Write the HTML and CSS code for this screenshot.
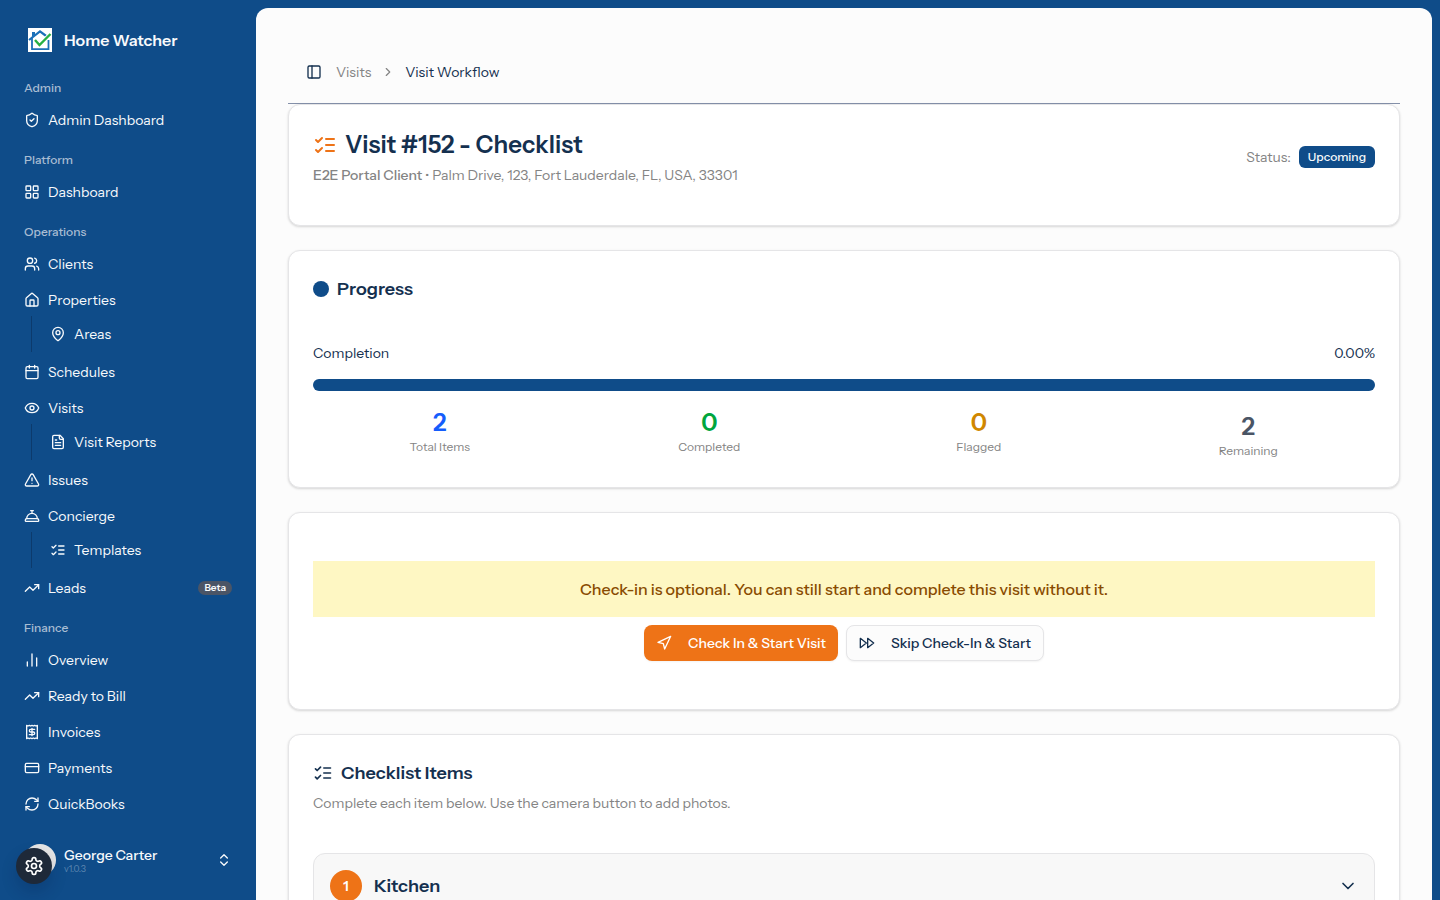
FILE: index.html
```html
<!DOCTYPE html>
<html lang="en">
<head>
<meta charset="utf-8">
<meta name="viewport" content="width=device-width, initial-scale=1">
<title>Visit Workflow - Home Watcher</title>
<link rel="stylesheet" href="styles.css">
</head>
<body>
<svg class="sprite" aria-hidden="true">
  <symbol id="shield" viewBox="0 0 24 24"><path d="M20 13c0 5-3.500 7.500-7.660 8.950a1 1 0 0 1-.67-.01C7.500 20.500 4 18 4 13V6a1 1 0 0 1 1-1c2 0 4.500-1.200 6.240-2.720a1.170 1.170 0 0 1 1.520 0C14.510 3.810 17 5 19 5a1 1 0 0 1 1 1z"/><path d="m9 12 2 2 4-4"/></symbol>
  <symbol id="grid" viewBox="0 0 24 24"><rect x="3" y="3" width="7" height="7" rx="1"/><rect x="14" y="3" width="7" height="7" rx="1"/><rect x="14" y="14" width="7" height="7" rx="1"/><rect x="3" y="14" width="7" height="7" rx="1"/></symbol>
  <symbol id="users" viewBox="0 0 24 24"><path d="M16 21v-2a4 4 0 0 0-4-4H6a4 4 0 0 0-4 4v2"/><circle cx="9" cy="7" r="4"/><path d="M22 21v-2a4 4 0 0 0-3-3.870M16 3.130a4 4 0 0 1 0 7.750"/></symbol>
  <symbol id="house" viewBox="0 0 24 24"><path d="M15 21v-8a1 1 0 0 0-1-1h-4a1 1 0 0 0-1 1v8"/><path d="M3 10a2 2 0 0 1 .709-1.528l7-5.999a2 2 0 0 1 2.582 0l7 5.999A2 2 0 0 1 21 10v9a2 2 0 0 1-2 2H5a2 2 0 0 1-2-2z"/></symbol>
  <symbol id="pin" viewBox="0 0 24 24"><path d="M20 10c0 4.993-5.539 10.193-7.399 11.799a1 1 0 0 1-1.202 0C9.539 20.193 4 14.993 4 10a8 8 0 0 1 16 0"/><circle cx="12" cy="10" r="3"/></symbol>
  <symbol id="calendar" viewBox="0 0 24 24"><path d="M8 2v4M16 2v4"/><rect x="3" y="4" width="18" height="18" rx="2"/><path d="M3 10h18"/></symbol>
  <symbol id="eye" viewBox="0 0 24 24"><path d="M2.062 12.348a1 1 0 0 1 0-.696 10.750 10.750 0 0 1 19.876 0 1 1 0 0 1 0 .696 10.750 10.750 0 0 1-19.876 0"/><circle cx="12" cy="12" r="3"/></symbol>
  <symbol id="file" viewBox="0 0 24 24"><path d="M15 2H6a2 2 0 0 0-2 2v16a2 2 0 0 0 2 2h12a2 2 0 0 0 2-2V7Z"/><path d="M14 2v4a2 2 0 0 0 2 2h4M10 9H8M16 13H8M16 17H8"/></symbol>
  <symbol id="alert" viewBox="0 0 24 24"><path d="m21.730 18-8-14a2 2 0 0 0-3.480 0l-8 14A2 2 0 0 0 4 21h16a2 2 0 0 0 1.730-3M12 9v4M12 17h.01"/></symbol>
  <symbol id="bell" viewBox="0 0 24 24"><path d="M3 20a1 1 0 0 1-1-1v-1a2 2 0 0 1 2-2h16a2 2 0 0 1 2 2v1a1 1 0 0 1-1 1Z"/><path d="M20 16a8 8 0 1 0-16 0M12 4v4M10 4h4"/></symbol>
  <symbol id="checks" viewBox="0 0 24 24"><path d="m3 17 2 2 4-4M3 7l2 2 4-4M13 6h8M13 12h8M13 18h8"/></symbol>
  <symbol id="trend" viewBox="0 0 24 24"><path d="M22 7 13.500 15.500 8.500 10.500 2 17"/><path d="M16 7h6v6"/></symbol>
  <symbol id="chart" viewBox="0 0 24 24"><path d="M5 21v-6M12 21V3M19 21V9"/></symbol>
  <symbol id="receipt" viewBox="0 0 24 24"><path d="M4 2v20l2-1 2 1 2-1 2 1 2-1 2 1 2-1 2 1V2l-2 1-2-1-2 1-2-1-2 1-2-1-2 1Z"/><path d="M16 8h-6a2 2 0 1 0 0 4h4a2 2 0 1 1 0 4H8M12 17.500v-11"/></symbol>
  <symbol id="card" viewBox="0 0 24 24"><rect x="2" y="5" width="20" height="14" rx="2"/><path d="M2 10h20"/></symbol>
  <symbol id="refresh" viewBox="0 0 24 24"><path d="M3 12a9 9 0 0 1 9-9 9.750 9.750 0 0 1 6.740 2.740L21 8"/><path d="M21 3v5h-5M21 12a9 9 0 0 1-9 9 9.750 9.750 0 0 1-6.740-2.740L3 16"/><path d="M8 16H3v5"/></symbol>
  <symbol id="updown" viewBox="0 0 24 24"><path d="m7 15 5 5 5-5M7 9l5-5 5 5"/></symbol>
  <symbol id="gear" viewBox="0 0 24 24"><path d="M12.220 2h-.44a2 2 0 0 0-2 2v.18a2 2 0 0 1-1 1.730l-.43.25a2 2 0 0 1-2 0l-.15-.08a2 2 0 0 0-2.730.73l-.22.38a2 2 0 0 0 .73 2.730l.15.1a2 2 0 0 1 1 1.720v.51a2 2 0 0 1-1 1.740l-.15.09a2 2 0 0 0-.73 2.730l.22.38a2 2 0 0 0 2.730.73l.15-.08a2 2 0 0 1 2 0l.43.25a2 2 0 0 1 1 1.730V20a2 2 0 0 0 2 2h.44a2 2 0 0 0 2-2v-.18a2 2 0 0 1 1-1.730l.43-.25a2 2 0 0 1 2 0l.15.08a2 2 0 0 0 2.730-.73l.22-.39a2 2 0 0 0-.73-2.730l-.15-.08a2 2 0 0 1-1-1.740v-.5a2 2 0 0 1 1-1.740l.15-.09a2 2 0 0 0 .73-2.730l-.22-.38a2 2 0 0 0-2.730-.73l-.15.08a2 2 0 0 1-2 0l-.43-.25a2 2 0 0 1-1-1.730V4a2 2 0 0 0-2-2z"/><circle cx="12" cy="12" r="3"/></symbol>
  <symbol id="panel" viewBox="0 0 24 24"><rect x="3" y="3" width="18" height="18" rx="2"/><path d="M9 3v18"/></symbol>
  <symbol id="right" viewBox="0 0 24 24"><path d="m9 18 6-6-6-6"/></symbol>
  <symbol id="down" viewBox="0 0 24 24"><path d="m6 9 6 6 6-6"/></symbol>
  <symbol id="navigate" viewBox="0 0 24 24"><path d="M3 11 22 2l-9 19-2-8z"/></symbol>
  <symbol id="forward" viewBox="0 0 24 24"><path d="m13 19 9-7-9-7zM2 19l9-7-9-7z"/></symbol>
</svg>

<div class="shell">
  <aside class="sidebar">
    <a class="brand" href="#">
      <svg class="logo" viewBox="0 0 24 24" aria-hidden="true">
        <rect width="24" height="24" fill="#fff"/>
        <path d="M4 9V4h3v3z" fill="#1c70b8"/>
        <path d="M1 12 12 3.300 19.500 9" fill="none" stroke="#1c70b8" stroke-width="2.200"/>
        <path d="M4 10v11.200h16.500V12" fill="none" stroke="#1c70b8" stroke-width="1.800"/>
        <path d="M7.500 12.500 11.500 16.800 22.500 6" fill="none" stroke="#fff" stroke-width="4"/>
        <path d="M7 12 11.500 17 22.500 6" fill="none" stroke="#27b043" stroke-width="2.400"/>
      </svg>
      <span>Home Watcher</span>
    </a>
    <nav class="nav" aria-label="Main">
      <section class="group">
        <h2 class="group-label">Admin</h2>
        <ul class="menu">
          <li><a class="item" href="#"><svg class="icon"><use href="#shield"/></svg>Admin Dashboard</a></li>
        </ul>
      </section>
      <section class="group">
        <h2 class="group-label">Platform</h2>
        <ul class="menu">
          <li><a class="item" href="#"><svg class="icon"><use href="#grid"/></svg>Dashboard</a></li>
        </ul>
      </section>
      <section class="group">
        <h2 class="group-label">Operations</h2>
        <ul class="menu">
          <li><a class="item" href="#"><svg class="icon"><use href="#users"/></svg>Clients</a></li>
          <li><a class="item" href="#"><svg class="icon"><use href="#house"/></svg>Properties</a>
            <ul class="submenu"><li><a class="subitem" href="#"><svg class="icon"><use href="#pin"/></svg>Areas</a></li></ul></li>
          <li><a class="item" href="#"><svg class="icon"><use href="#calendar"/></svg>Schedules</a></li>
          <li><a class="item" href="#"><svg class="icon"><use href="#eye"/></svg>Visits</a>
            <ul class="submenu"><li><a class="subitem" href="#"><svg class="icon"><use href="#file"/></svg>Visit Reports</a></li></ul></li>
          <li><a class="item" href="#"><svg class="icon"><use href="#alert"/></svg>Issues</a></li>
          <li><a class="item" href="#"><svg class="icon"><use href="#bell"/></svg>Concierge</a>
            <ul class="submenu"><li><a class="subitem" href="#"><svg class="icon"><use href="#checks"/></svg>Templates</a></li></ul></li>
          <li><a class="item" href="#"><svg class="icon"><use href="#trend"/></svg>Leads<span class="beta">Beta</span></a></li>
        </ul>
      </section>
      <section class="group">
        <h2 class="group-label">Finance</h2>
        <ul class="menu">
          <li><a class="item" href="#"><svg class="icon"><use href="#chart"/></svg>Overview</a></li>
          <li><a class="item" href="#"><svg class="icon"><use href="#trend"/></svg>Ready to Bill</a></li>
          <li><a class="item" href="#"><svg class="icon"><use href="#receipt"/></svg>Invoices</a></li>
          <li><a class="item" href="#"><svg class="icon"><use href="#card"/></svg>Payments</a></li>
          <li><a class="item" href="#"><svg class="icon"><use href="#refresh"/></svg>QuickBooks</a></li>
        </ul>
      </section>
    </nav>
    <button class="user" type="button">
      <span class="avatar"></span>
      <span class="user-text"><span class="user-name">George Carter</span><span class="version">v1.0.3</span></span>
      <svg class="icon"><use href="#updown"/></svg>
    </button>
  </aside>

  <main class="main">
    <header class="topbar">
      <button class="toggle" type="button" aria-label="Toggle sidebar"><svg class="icon"><use href="#panel"/></svg></button>
      <nav class="crumbs" aria-label="Breadcrumb">
        <a class="crumb" href="#">Visits</a>
        <svg class="icon small"><use href="#right"/></svg>
        <span class="current">Visit Workflow</span>
      </nav>
    </header>

    <div class="cards">
      <section class="panel visit">
        <div>
          <h1 class="visit-title"><svg class="icon large accent"><use href="#checks"/></svg>Visit #152 - Checklist</h1>
          <p class="muted visit-sub"><span class="client">E2E Portal Client</span> • Palm Drive, 123, Fort Lauderdale, FL, USA, 33301</p>
        </div>
        <div class="status"><span>Status:</span><span class="status-badge">Upcoming</span></div>
      </section>

      <section class="panel">
        <h2 class="title"><span class="dot"></span>Progress</h2>
        <div class="completion"><span>Completion</span><span>0.00%</span></div>
        <div class="bar" role="progressbar" aria-label="Completion" aria-valuenow="0" aria-valuemin="0" aria-valuemax="100"></div>
        <div class="stats">
          <div class="stat"><span class="num blue">2</span><span class="stat-label">Total Items</span></div>
          <div class="stat"><span class="num green">0</span><span class="stat-label">Completed</span></div>
          <div class="stat"><span class="num gold">0</span><span class="stat-label">Flagged</span></div>
          <div class="stat inset"><span class="num slate">2</span><span class="stat-label">Remaining</span></div>
        </div>
      </section>

      <section class="panel checkin">
        <p class="notice">Check-in is optional. You can still start and complete this visit without it.</p>
        <div class="actions">
          <button class="btn primary" type="button"><svg class="icon"><use href="#navigate"/></svg>Check In &amp; Start Visit</button>
          <button class="btn" type="button"><svg class="icon"><use href="#forward"/></svg>Skip Check-In &amp; Start</button>
        </div>
      </section>

      <section class="panel">
        <h2 class="title"><svg class="icon medium"><use href="#checks"/></svg>Checklist Items</h2>
        <p class="muted desc">Complete each item below. Use the camera button to add photos.</p>
        <div class="areas">
          <button class="area" type="button" aria-expanded="false"><span class="count">1</span><span class="area-name">Kitchen</span><svg class="icon"><use href="#down"/></svg></button>
        </div>
      </section>
    </div>
  </main>
</div>
<button class="settings" type="button" aria-label="Settings"><svg class="icon medium"><use href="#gear"/></svg></button>
</body>
</html>
```
FILE: styles.css
```css
:root {
  --blue: #0f4c89;
  --navy: #14304f;
  --orange: #ee7317;
  --muted: #848484;
  --line: #e5e5e7;
  --surface: #fcfcfc;
}
* { box-sizing: border-box; }
body {
  margin: 0;
  background: var(--blue);
  color: var(--navy);
  font-family: "Instrument Sans", Inter, "Liberation Sans", sans-serif;
  font-size: 14px;
  line-height: 20px;
}
h1, h2, p, ul { margin: 0; padding: 0; }
ul { list-style: none; }
a { color: inherit; text-decoration: none; }
button { font: inherit; color: inherit; border: 0; background: none; padding: 0; cursor: pointer; }
.sprite { position: absolute; width: 0; height: 0; }
.icon {
  width: 16px;
  height: 16px;
  flex: none;
  fill: none;
  stroke: currentColor;
  stroke-width: 2;
  stroke-linecap: round;
  stroke-linejoin: round;
}
.icon.small { width: 14px; height: 14px; }
.icon.medium { width: 20px; height: 20px; }
.icon.large { width: 24px; height: 24px; }
.accent { color: var(--orange); }

.shell { display: flex; height: 100vh; }

/* Sidebar */
.sidebar {
  display: flex;
  flex-direction: column;
  flex: none;
  width: 256px;
  padding: 16px;
  color: #f8fafc;
}
.brand {
  display: flex;
  align-items: center;
  gap: 12px;
  height: 48px;
  padding-left: 12px;
  font-size: 16px;
  font-weight: 600;
}
.logo { width: 24px; height: 24px; }
.nav {
  display: flex;
  flex: 1;
  flex-direction: column;
  gap: 8px;
  min-height: 0;
  margin-top: 8px;
  overflow: hidden;
}
.group-label {
  height: 32px;
  padding-left: 8px;
  color: #a9bdd3;
  font-size: 12px;
  font-weight: 500;
  line-height: 32px;
}
.menu { display: flex; flex-direction: column; gap: 4px; }
.item, .subitem {
  display: flex;
  align-items: center;
  gap: 8px;
  height: 32px;
  padding: 0 8px;
}
.submenu {
  margin-left: 15px;
  padding: 4px 0 4px 10px;
  border-left: 1px solid #0c3a6c;
}
.subitem { height: 28px; }
.beta {
  margin-left: auto;
  padding: 0 6px;
  border-radius: 7px;
  background: #4b5566;
  font-size: 10px;
  font-weight: 600;
  line-height: 14px;
}
.user {
  display: flex;
  align-items: center;
  gap: 8px;
  height: 48px;
  padding: 0 8px;
  text-align: left;
}
.avatar { width: 32px; height: 32px; border-radius: 50%; background: #e5e5e5; }
.user-text { display: flex; flex: 1; flex-direction: column; }
.user-name { font-weight: 500; line-height: 18px; }
.version { color: #5c86b0; font-size: 9px; line-height: 10px; }
.settings {
  position: fixed;
  bottom: 16px;
  left: 16px;
  display: grid;
  place-items: center;
  width: 36px;
  height: 36px;
  border-radius: 50%;
  background: #1e2939;
  color: #fff;
  box-shadow: 0 8px 16px rgb(0 20 60 / 20%);
}

/* Main */
.main {
  flex: 1;
  min-width: 0;
  margin: 8px 8px 0 0;
  padding: 32px 32px 0;
  overflow-y: auto;
  scrollbar-width: none;
  border-radius: 12px 12px 0 0;
  background: var(--surface);
}
.topbar {
  display: flex;
  align-items: center;
  gap: 8px;
  height: 64px;
  padding: 0 12px;
  border-bottom: 1px solid #8490a9;
}
.toggle { display: grid; place-items: center; width: 28px; height: 28px; }
.crumbs { display: flex; align-items: center; gap: 10px; }
.crumb, .crumbs .icon { color: var(--muted); }
.cards { display: flex; flex-direction: column; gap: 24px; padding-bottom: 32px; }
.panel {
  padding: 24px;
  border: 1px solid var(--line);
  border-radius: 12px;
  background: #fff;
  box-shadow: 0 1px 3px rgb(0 0 0 / 10%), 0 1px 2px rgb(0 0 0 / 6%);
}
.muted { color: var(--muted); }
.visit {
  display: flex;
  align-items: center;
  justify-content: space-between;
  padding-bottom: 40px;
}
.visit-title {
  display: flex;
  align-items: center;
  gap: 8px;
  font-size: 24px;
  font-weight: 600;
  line-height: 32px;
}
.visit-sub { margin-top: 4px; }
.client { font-weight: 500; }
.status { display: flex; align-items: center; gap: 8px; color: var(--muted); }
.status-badge {
  padding: 3px 9px;
  border-radius: 6px;
  background: var(--blue);
  color: #f8fafc;
  font-size: 12px;
  font-weight: 500;
  line-height: 16px;
}
.title {
  display: flex;
  align-items: center;
  gap: 8px;
  font-size: 18px;
  font-weight: 600;
  line-height: 28px;
}
.dot { width: 16px; height: 16px; border-radius: 50%; background: var(--blue); }
.completion { display: flex; justify-content: space-between; margin-top: 40px; }
.bar { height: 12px; margin: 16px 0; border-radius: 6px; background: var(--blue); }
.stats { display: grid; grid-template-columns: repeat(4, 1fr); gap: 16px; text-align: center; }
.stat { display: flex; flex-direction: column; }
.stat.inset { padding: 4px; }
.num { font-size: 24px; font-weight: 600; line-height: 32px; }
.stat-label { color: var(--muted); font-size: 12px; line-height: 16px; }
.blue { color: #155dfc; }
.green { color: #00a63e; }
.gold { color: #d08700; }
.slate { color: #4a5565; }
.checkin { padding: 48px 24px; }
.notice {
  padding: 16px;
  background: #fef7c3;
  color: #894b00;
  font-size: 16px;
  font-weight: 500;
  line-height: 24px;
  text-align: center;
}
.actions { display: flex; justify-content: center; gap: 8px; margin-top: 8px; }
.btn {
  display: flex;
  align-items: center;
  gap: 16px;
  height: 36px;
  padding: 0 12px;
  border: 1px solid var(--line);
  border-radius: 8px;
  background: var(--surface);
  font-weight: 500;
  box-shadow: 0 1px 2px rgb(0 0 0 / 5%);
}
.primary { border: 0; background: var(--orange); color: #fff; }
.desc { margin-top: 6px; }
.areas {
  margin-top: 40px;
  overflow: hidden;
  border: 1px solid var(--line);
  border-radius: 12px;
  background: #f8f8f8;
}
.area {
  display: flex;
  align-items: center;
  gap: 12px;
  width: 100%;
  padding: 16px;
  text-align: left;
}
.area .icon { width: 20px; height: 20px; }
.count {
  width: 32px;
  height: 32px;
  border-radius: 50%;
  background: var(--orange);
  color: #fff;
  font-weight: 600;
  line-height: 32px;
  text-align: center;
}
.area-name { flex: 1; font-size: 18px; font-weight: 600; line-height: 28px; }
```
